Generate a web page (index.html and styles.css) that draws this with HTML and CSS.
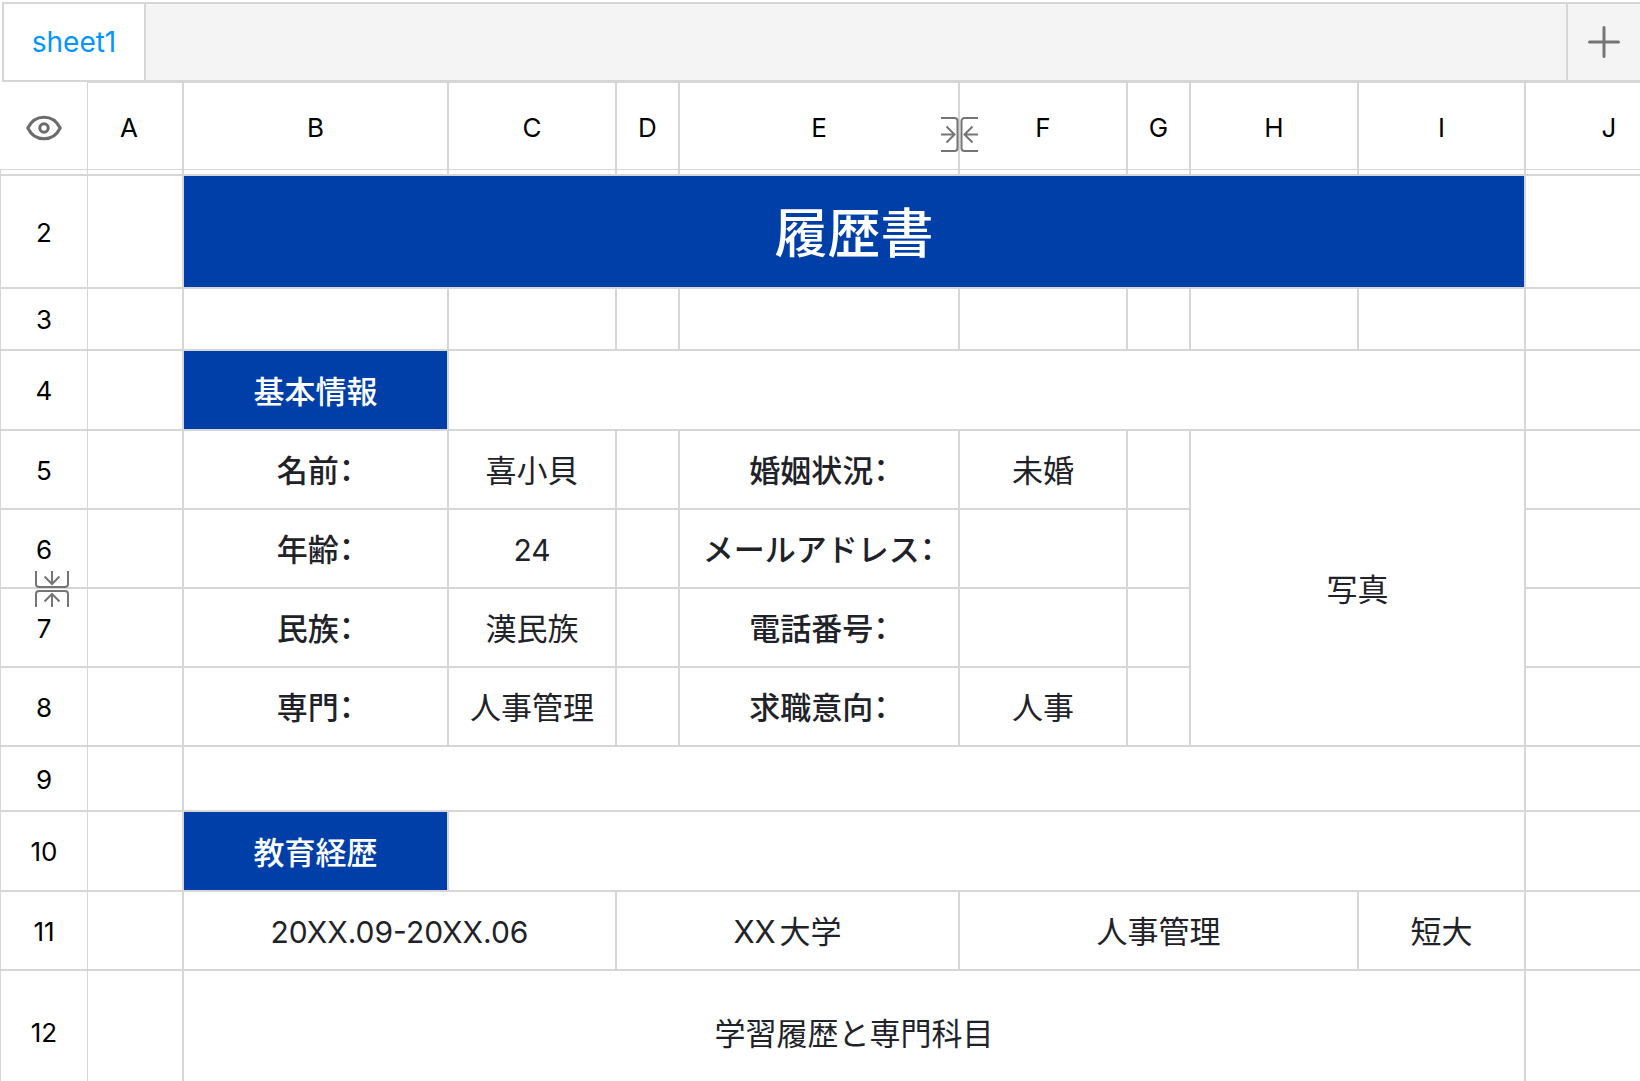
FILE: index.html
```
<!DOCTYPE html>
<html lang="ja">
<head>
    <meta charset="UTF-8">
    <title>履歴書</title>
    <link rel="stylesheet" href="styles.css">
</head>
<body>
    <!-- シートタブ -->
    <nav class="tab-bar">
        <button class="tab" type="button">sheet1</button>
        <button class="add-tab" type="button" aria-label="シートを追加">
            <svg width="32" height="32" viewBox="0 0 32 32">
                <path d="M1.5 16h29M16 1.5v29" />
            </svg>
        </button>
    </nav>

    <table class="sheet">
        <colgroup>
            <col class="col-head">
            <col class="col-a">
            <col class="col-b">
            <col class="col-c">
            <col class="col-d">
            <col class="col-e">
            <col class="col-f">
            <col class="col-g">
            <col class="col-h">
            <col class="col-i">
            <col class="col-j">
        </colgroup>
        <thead>
            <tr class="row-letters">
                <td class="corner">
                    <button class="icon-button show-hidden" type="button" aria-label="表示">
                        <svg width="36" height="26" viewBox="0 0 36 26">
                            <path d="M1.8 13C5 6.500 11 2.200 18 2.200S31 6.500 34.200 13C31 19.500 25 23.800 18 23.800S5 19.500 1.800 13z" />
                            <circle cx="18" cy="13" r="4.200" />
                        </svg>
                    </button>
                </td>
                <th class="clipped" scope="col">A</th>
                <th scope="col">B</th>
                <th scope="col">C</th>
                <th scope="col">D</th>
                <th scope="col">E
                    <button class="icon-button fold-column" type="button" aria-label="列を折りたたむ">
                        <svg width="37" height="35" viewBox="0 0 37 35">
                            <path d="M0 1h13.500a3 3 0 0 1 3 3v27a3 3 0 0 1-3 3H0M0 17.500h13M5.500 9.500l8 8-8 8" />
                            <path d="M37 1H23.500a3 3 0 0 0-3 3v27a3 3 0 0 0 3 3H37M37 17.500H24M31.500 9.500l-8 8 8 8" />
                        </svg>
                    </button>
                </th>
                <th scope="col">F</th>
                <th scope="col">G</th>
                <th scope="col">H</th>
                <th scope="col">I</th>
                <th scope="col">J</th>
            </tr>
        </thead>
        <tbody>
            <!-- 1行目はほぼ閉じている -->
            <tr class="row-closed">
                <th></th><td></td><td></td><td></td><td></td><td></td><td></td><td></td><td></td><td></td><td></td>
            </tr>
            <tr class="row-title">
                <th scope="row">2</th>
                <td></td>
                <td class="filled title" colspan="8">履歴書</td>
                <td></td>
            </tr>
            <tr class="row-blank">
                <th scope="row">3</th>
                <td></td><td></td><td></td><td></td><td></td><td></td><td></td><td></td><td></td><td></td>
            </tr>
            <tr class="row-section">
                <th scope="row">4</th>
                <td></td>
                <td class="filled">基本情報</td>
                <td colspan="7"></td>
                <td></td>
            </tr>
            <tr class="row-info">
                <th scope="row">5</th>
                <td></td>
                <td class="label">名前：</td>
                <td>喜小貝</td>
                <td></td>
                <td class="label">婚姻状況：</td>
                <td>未婚</td>
                <td></td>
                <td colspan="2" rowspan="4">写真</td>
                <td></td>
            </tr>
            <tr class="row-info">
                <th scope="row">6
                    <button class="icon-button fold-row" type="button" aria-label="行を折りたたむ">
                        <svg width="34" height="36" viewBox="0 0 34 36">
                            <path d="M1 0v13a3 3 0 0 0 3 3h26a3 3 0 0 0 3-3V0M17 0v12.500M9.500 5.500l7.500 7.500 7.500-7.500" />
                            <path d="M1 36V23a3 3 0 0 1 3-3h26a3 3 0 0 1 3 3v13M17 36V23.500M9.500 30.500l7.500-7.500 7.500 7.500" />
                        </svg>
                    </button>
                </th>
                <td></td>
                <td class="label">年齢：</td>
                <td class="number">24</td>
                <td></td>
                <td class="label">メールアドレス：</td>
                <td></td>
                <td></td>
                <td></td>
            </tr>
            <tr class="row-info">
                <th scope="row">7</th>
                <td></td>
                <td class="label">民族：</td>
                <td>漢民族</td>
                <td></td>
                <td class="label">電話番号：</td>
                <td></td>
                <td></td>
                <td></td>
            </tr>
            <tr class="row-info">
                <th scope="row">8</th>
                <td></td>
                <td class="label">専門：</td>
                <td>人事管理</td>
                <td></td>
                <td class="label">求職意向：</td>
                <td>人事</td>
                <td></td>
                <td></td>
            </tr>
            <tr class="row-gap">
                <th scope="row">9</th>
                <td></td>
                <td colspan="8"></td>
                <td></td>
            </tr>
            <tr class="row-section">
                <th scope="row">10</th>
                <td></td>
                <td class="filled">教育経歴</td>
                <td colspan="7"></td>
                <td></td>
            </tr>
            <tr class="row-info">
                <th scope="row">11</th>
                <td></td>
                <td class="number" colspan="2">20XX.09-20XX.06</td>
                <td colspan="2">XX大学</td>
                <td colspan="3">人事管理</td>
                <td>短大</td>
                <td></td>
            </tr>
            <tr class="row-large">
                <th scope="row">12</th>
                <td></td>
                <td colspan="8">学習履歴と専門科目</td>
                <td></td>
            </tr>
        </tbody>
    </table>
</body>
</html>
```
FILE: styles.css
```
* {
    box-sizing: border-box;
}

body {
    margin: 0;
    height: 100vh;
    overflow: hidden;
    background: #fff;
    font-family: Inter, "Noto Sans CJK JP", sans-serif;
    color: #1f2329;
}

button {
    margin: 0;
    padding: 0;
    border: 0;
    background: none;
    font: inherit;
    cursor: pointer;
}

svg {
    display: block;
    fill: none;
    stroke: #757575;
    stroke-width: 2;
}

/* シートタブ */
.tab-bar {
    display: flex;
    height: 80px;
    margin: 2px 0 0 2px;
    border: 2px solid #d6d6d6;
    border-right: 0;
    background: #f4f4f4;
}

.tab {
    width: 142px;
    border-right: 2px solid #d6d6d6;
    background: #fff;
    color: #0095ff;
    font-size: 28px;
}

.add-tab {
    display: flex;
    justify-content: center;
    align-items: center;
    width: 74px;
    margin-left: auto;
    border-left: 2px solid #d6d6d6;
}

.add-tab svg {
    stroke-width: 3;
    stroke-linecap: round;
}

/* 表 */
.sheet {
    width: 1694px;
    table-layout: fixed;
    border-collapse: separate;
    border-spacing: 0;
}

.col-head { width: 88px; }
.col-a { width: 96px; }
.col-b { width: 265px; }
.col-c,
.col-f,
.col-h,
.col-j { width: 168px; }
.col-d,
.col-g { width: 63px; }
.col-e { width: 280px; }
.col-i { width: 167px; }

.sheet th,
.sheet td {
    padding: 2px 0 0;
    border: 0 solid #d6d6d6;
    border-width: 0 2px 2px 0;
    text-align: center;
    vertical-align: middle;
    white-space: nowrap;
    line-height: 1;
}

.sheet td {
    font-size: 31px;
    text-autospace: normal;
}

.sheet th {
    position: relative;
    color: #000;
    font-size: 26px;
    font-weight: 400;
}

/* 行番号 */
.sheet tbody th {
    border-width: 0 1px 2px 1px;
}

/* 列名 */
.sheet thead th {
    padding-top: 4px;
    border-width: 1px 2px 1px 0;
}

.sheet thead .clipped {
    padding-right: 12px;
}

.sheet .corner {
    padding-top: 4px;
    border-width: 0 1px 1px 0;
}

.row-letters { height: 88px; }
.row-closed { height: 6px; }
.row-title { height: 113px; }
.row-blank { height: 62px; }
.row-gap { height: 65px; }
.row-section { height: 80px; }
.row-info { height: 79px; }
.row-large { height: 124px; }

.sheet .label {
    font-weight: 500;
    font-feature-settings: "halt";
}

.sheet .number {
    font-size: 30px;
}

.sheet .filled {
    background: #003fa8;
    color: #fff;
    font-weight: 500;
}

.sheet .title {
    padding-top: 6px;
    font-size: 53px;
}

/* アイコン */
.show-hidden {
    display: block;
    margin: 0 auto;
}

.show-hidden svg {
    stroke: #6b6b6b;
    stroke-width: 3;
}

.fold-column,
.fold-row {
    position: absolute;
    z-index: 1;
}

.fold-column {
    top: 34px;
    right: -20px;
}

.fold-row {
    bottom: -20px;
    left: 34px;
}
```
